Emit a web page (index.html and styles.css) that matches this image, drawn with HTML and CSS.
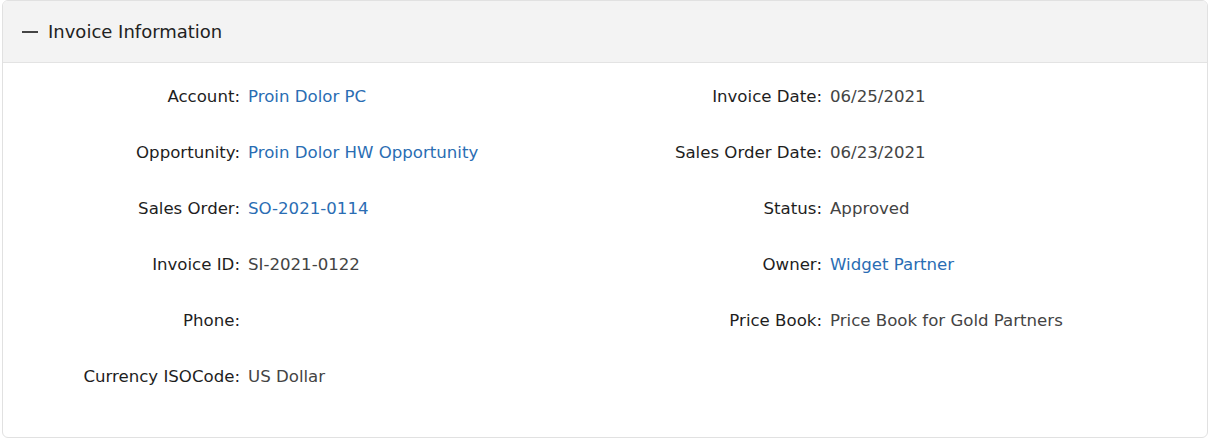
FILE: index.html
```html
<!DOCTYPE html>
<html lang="en">
<head>
    <meta charset="UTF-8" />
    <meta name="viewport" content="width=device-width, initial-scale=1.0" />
    <link rel="stylesheet" href="styles.css">
    <title>Invoice Information</title>
</head>
<body>
    <div class="panel">
        <div class="panel-head">
            <span class="toggle"></span>
            <span class="panel-title">Invoice Information</span>
        </div>

        <div class="panel-body">
            <div class="field">
                <span class="label">Account:</span>
                <a class="value" href="#">Proin Dolor PC</a>
            </div>
            <div class="field">
                <span class="label">Invoice Date:</span>
                <span class="value">06/25/2021</span>
            </div>

            <div class="field">
                <span class="label">Opportunity:</span>
                <a class="value" href="#">Proin Dolor HW Opportunity</a>
            </div>
            <div class="field">
                <span class="label">Sales Order Date:</span>
                <span class="value">06/23/2021</span>
            </div>

            <div class="field">
                <span class="label">Sales Order:</span>
                <a class="value" href="#">SO-2021-0114</a>
            </div>
            <div class="field">
                <span class="label">Status:</span>
                <span class="value">Approved</span>
            </div>

            <div class="field">
                <span class="label">Invoice ID:</span>
                <span class="value">SI-2021-0122</span>
            </div>
            <div class="field">
                <span class="label">Owner:</span>
                <a class="value" href="#">Widget Partner</a>
            </div>

            <div class="field">
                <span class="label">Phone:</span>
                <span class="value"></span>
            </div>
            <div class="field">
                <span class="label">Price Book:</span>
                <span class="value">Price Book for Gold Partners</span>
            </div>

            <div class="field">
                <span class="label">Currency ISOCode:</span>
                <span class="value">US Dollar</span>
            </div>
            <div class="field"></div>
        </div>
    </div>
</body>
</html>
```

FILE: styles.css
```css
* {
    box-sizing: border-box;
}

body {
    margin: 0;
    padding: 0 4px 0 2px;
    font-family: "DejaVu Sans", "Liberation Sans", sans-serif;
    background-color: #fff;
    color: #222;
}

.panel {
    height: 438px;
    border: 1px solid #e1e1e1;
    border-radius: 6px;
    overflow: hidden;
}

.panel-head {
    height: 62px;
    display: flex;
    align-items: center;
    gap: 10px;
    padding: 0 19px;
    background-color: #f3f3f3;
    border-bottom: 1px solid #e3e3e3;
}

.toggle {
    width: 16px;
    height: 2px;
    margin-top: 1px;
    background-color: #444;
}

.panel-title {
    font-size: 18px;
    color: #222;
}

.panel-body {
    display: grid;
    grid-template-columns: 1fr 1fr;
    padding: 5px 20px 0;
}

.field {
    height: 56px;
    display: flex;
    align-items: center;
    gap: 8px;
    font-size: 16.6px;
}

.label {
    width: 217px;
    flex-shrink: 0;
    text-align: right;
    color: #1e1e1e;
}

.value {
    color: #444;
    text-decoration: none;
}

a.value {
    color: #2a6db3;
}
```
